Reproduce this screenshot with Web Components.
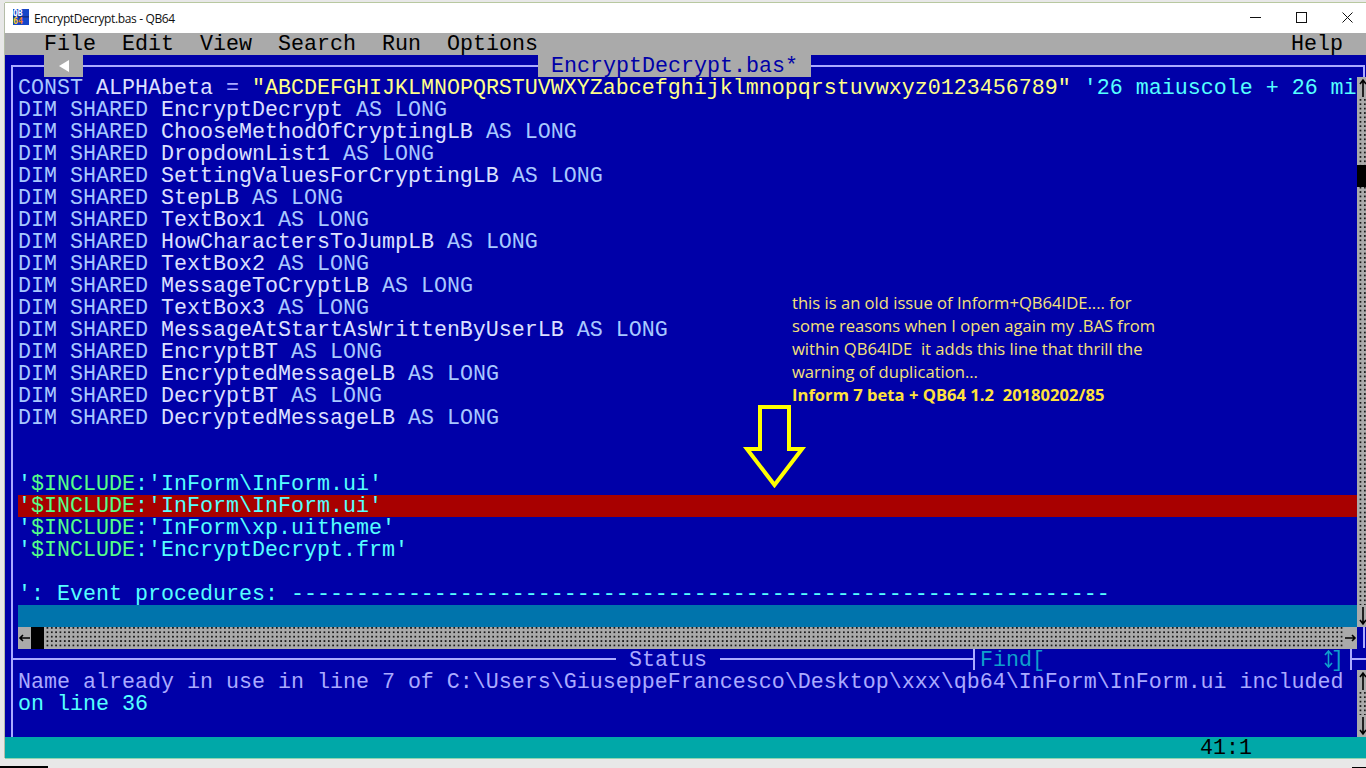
<!DOCTYPE html>
<html><head><meta charset="utf-8">
<style>
html,body{margin:0;height:100%;background:#f0f0f0;overflow:hidden}
</style></head><body>
<qb-window></qb-window>
<template id="t-window"><style>
:host{display:flex;flex-direction:column;width:1366px;height:768px;box-sizing:border-box;background:#e8e8e8;font-family:"Liberation Mono",monospace;position:relative;overflow:hidden}
.frame{flex:none;margin-left:5px;height:755px;margin-top:3px;display:flex;flex-direction:column;box-shadow:0 -1px #b8c8a0,-1px 0 #b4bca8,0 1px #8fd4b0}
.foot{flex:1;position:relative}
.foot i{display:block;height:2px;background:#000;position:absolute;bottom:0}
</style>
<div class="frame"><win-title></win-title><ide-menu></ide-menu><ide-editor></ide-editor><ide-status></ide-status><ide-bar></ide-bar></div>
<div class="foot"><i style="left:0;width:48px"></i><i style="right:0;width:14px;height:1px"></i></div>
</template>
<script>
const MONO='font-family:"Liberation Mono",monospace;font-size:21.67px;line-height:24px;white-space:pre;';
function def(name,html){customElements.define(name,class extends HTMLElement{constructor(){super();this.attachShadow({mode:'open'}).innerHTML=html}})}
function arrowSvg(d){return `<svg width="13" height="22" viewBox="0 0 13 22"><path d="${d}" fill="none" stroke="#000" stroke-width="1.6"/></svg>`}
const dots=`background-color:#aaa;background-image:conic-gradient(#1a1a1a 25%,#aaa 0);background-size:4.333px 4.4px;`;

def('win-title',`<style>:host{display:flex;align-items:center;height:30px;background:#fff;font:12px "Segoe UI","Open Sans","Noto Sans",sans-serif;color:#111}
svg{display:block}.ic{margin:-2px 5px 0 8px}.t{flex:1;letter-spacing:-.36px}.b{display:flex;width:46px;height:28px;padding-bottom:2px;align-items:center;justify-content:center}.btns{display:flex;margin-right:-4px}</style>
<svg class="ic" width="16" height="16" viewBox="0 0 16 16"><rect width="16" height="16" fill="#1546c8"/><rect y="7.5" width="16" height=".8" fill="#0a1a50"/><text x="0" y="7" font-family="'DejaVu Sans Mono',monospace" font-weight="700" font-size="8" fill="#fff">QB</text><text x="0" y="15" font-family="'DejaVu Sans Mono',monospace" font-weight="700" font-size="8.4" fill="#ffd020">6<tspan fill="#f08020">4</tspan></text></svg>
<span class="t">EncryptDecrypt.bas - QB64</span>
<div class="btns"><span class="b"><svg width="11" height="11"><path d="M0 5.5h11" stroke="#111"/></svg></span>
<span class="b"><svg width="11" height="11"><rect x=".5" y=".5" width="10" height="10" fill="none" stroke="#111"/></svg></span>
<span class="b"><svg width="11" height="11"><path d="M.5.5l10 10M10.5.5l-10 10" stroke="#111"/></svg></span></div>`);

def('ide-menu',`<style>:host{display:flex;height:22px;background:#aaa;color:#000;${MONO}padding-left:39px}
span{margin-right:26px;height:22px}.h{margin:0 23px 0 auto}</style>
<span>File</span><span>Edit</span><span>View</span><span>Search</span><span>Run</span><span>Options</span><span class="h">Help</span>`);

def('ide-editor',`<style>:host{display:block;position:relative;z-index:1;height:593px;background:#0000a8;${MONO}color:#aaf;flex:none}
.box{position:absolute;left:6px;top:10px;right:1px;bottom:0;border:solid #aaf;border-width:2px 2px 0 2px}
.code{position:absolute;left:13px;top:22px;width:1339px;overflow:hidden;display:flex;flex-direction:column}
.l{height:22px;display:block;flex:none}
.hl{background:#a80000}
.band{background:#0074ac}
.k{color:#a8c8ff}.w{color:#dde0ff}.y{color:#ff8}.c{color:#5ff}.g{color:#5f8}
.tab{position:absolute;left:533px;top:0;width:273px;height:22px;background:#aaa;color:#0000a8;text-align:center}
.back{position:absolute;left:39px;top:0;width:39px;height:22px;background:#aaa;display:flex;align-items:center;justify-content:center}
.vs{position:absolute;right:0;top:22px;width:9px;bottom:21px;${dots}}
.vs .th{position:absolute;left:0;top:88px;width:9px;height:22px;background:#000}
.vs .up,.vs .dn{position:absolute;left:0;width:9px;height:22px;background:#aaa}
.vs .up{top:0}.vs .dn{bottom:0}
.hs{position:absolute;left:13px;top:572px;width:1339px;height:22px;${dots}}
.hs .a{position:absolute;top:0;width:13px;height:22px;background:#aaa}
.hs .th{position:absolute;left:13px;top:0;width:13px;height:22px;background:#000}
.note{position:absolute;left:787px;top:236px;font:16.6px/23px "Open Sans","Noto Sans",sans-serif;color:#f5e27a;white-space:pre}
.note b{color:#ffe23c;font-weight:700}
svg{display:block}.arrow{position:absolute;left:737px;top:349px}
</style>
<div class="box"></div>
<div class="code"><span class="l"><span class="k">CONST</span> <span class="w">ALPHAbeta</span> = <span class="y">"ABCDEFGHIJKLMNOPQRSTUVWXYZabcefghijklmnopqrstuvwxyz0123456789"</span> <span class="c">'26 maiuscole + 26 mi</span></span>
<span class="l"><span class="k">DIM SHARED</span> <span class="w">EncryptDecrypt</span> <span class="k">AS LONG</span></span>
<span class="l"><span class="k">DIM SHARED</span> <span class="w">ChooseMethodOfCryptingLB</span> <span class="k">AS LONG</span></span>
<span class="l"><span class="k">DIM SHARED</span> <span class="w">DropdownList1</span> <span class="k">AS LONG</span></span>
<span class="l"><span class="k">DIM SHARED</span> <span class="w">SettingValuesForCryptingLB</span> <span class="k">AS LONG</span></span>
<span class="l"><span class="k">DIM SHARED</span> <span class="w">StepLB</span> <span class="k">AS LONG</span></span>
<span class="l"><span class="k">DIM SHARED</span> <span class="w">TextBox1</span> <span class="k">AS LONG</span></span>
<span class="l"><span class="k">DIM SHARED</span> <span class="w">HowCharactersToJumpLB</span> <span class="k">AS LONG</span></span>
<span class="l"><span class="k">DIM SHARED</span> <span class="w">TextBox2</span> <span class="k">AS LONG</span></span>
<span class="l"><span class="k">DIM SHARED</span> <span class="w">MessageToCryptLB</span> <span class="k">AS LONG</span></span>
<span class="l"><span class="k">DIM SHARED</span> <span class="w">TextBox3</span> <span class="k">AS LONG</span></span>
<span class="l"><span class="k">DIM SHARED</span> <span class="w">MessageAtStartAsWrittenByUserLB</span> <span class="k">AS LONG</span></span>
<span class="l"><span class="k">DIM SHARED</span> <span class="w">EncryptBT</span> <span class="k">AS LONG</span></span>
<span class="l"><span class="k">DIM SHARED</span> <span class="w">EncryptedMessageLB</span> <span class="k">AS LONG</span></span>
<span class="l"><span class="k">DIM SHARED</span> <span class="w">DecryptBT</span> <span class="k">AS LONG</span></span>
<span class="l"><span class="k">DIM SHARED</span> <span class="w">DecryptedMessageLB</span> <span class="k">AS LONG</span></span>
<span class="l"></span><span class="l"></span>
<span class="l c">'<span class="g">$INCLUDE</span>:'InForm\\InForm.ui'</span>
<span class="l c hl">'<span class="g">$INCLUDE</span>:'InForm\\InForm.ui'</span>
<span class="l c">'<span class="g">$INCLUDE</span>:'InForm\\xp.uitheme'</span>
<span class="l c">'<span class="g">$INCLUDE</span>:'EncryptDecrypt.frm'</span>
<span class="l"></span>
<span class="l c">': Event procedures: ---------------------------------------------------------------</span>
<span class="l band"></span></div>
<div class="back"><svg width="12" height="12" viewBox="0 0 12 12"><path d="M11 0v12L1 6z" fill="#fff"/></svg></div>
<div class="tab">EncryptDecrypt.bas*</div>
<div class="vs"><div class="up">${arrowSvg('M6 20V3M3 7l3-4 3 4')}</div><div class="th"></div><div class="dn">${arrowSvg('M6 2v17M3 15l3 4 3-4')}</div></div>
<div class="hs"><div class="a" style="left:0">${arrowSvg('M12 11H2M5 8l-3 3 3 3')}</div><div class="th"></div><div class="a" style="right:0">${arrowSvg('M1 11h10M8 8l3 3-3 3')}</div></div>
<div class="note">this is an old issue of Inform+QB64IDE.... for
some reasons when I open again my .BAS from
within QB64IDE  it adds this line that thrill the
warning of duplication...
<b>Inform 7 beta + QB64 1.2  20180202/85</b></div>
<svg class="arrow" width="68" height="84" viewBox="0 0 68 84"><path d="M18 3H47V45H60L32.5 81 5 45H18Z" fill="none" stroke="#ff0" stroke-width="4"/></svg>`);

def('ide-status',`<style>:host{display:block;position:relative;height:89px;background:#0000a8;${MONO}line-height:22px;color:#aaf;flex:none}
.box{position:absolute;left:6px;top:0;bottom:0;border-left:2px solid #aaf}
.rule{position:absolute;top:10px;height:2px;background:#aaf}
.ttl{position:absolute;left:624px;top:2px;background:#0000a8}
.m{position:absolute;left:13px;top:24px}
.c{color:#5ff}
.find{position:absolute;left:975px;top:2px;color:#0fa0cc}
.tick{position:absolute;left:968px;top:0;width:2px;height:22px;background:#aaf}
.ud{position:absolute;left:1317px;top:2px}
.br{position:absolute;left:1326px;top:2px;color:#0fa0cc}
.end{position:absolute;left:1345px;top:0;width:18px;height:22px;border:solid #aaf;border-width:0 2px;box-sizing:border-box}
.end i{display:block;height:2px;background:#aaf;margin-top:10px}
.vs{position:absolute;right:0;top:22px;width:9px;bottom:0;${dots}}
.vs .up,.vs .dn{position:absolute;left:0;width:9px;height:22px;background:#aaa}.vs .up{top:0}.vs .dn{bottom:0}
svg{display:block}
</style>
<div class="box"></div>
<div class="rule" style="left:8px;width:603px"></div><div class="rule" style="left:715px;width:254px"></div>
<span class="ttl">Status</span><div class="tick"></div><span class="find">Find[</span>
<svg class="ud" width="13" height="18" viewBox="0 0 13 18"><path d="M6.5 1v16M3 5l3.5-4L10 5M3 13l3.5 4 3.5-4" fill="none" stroke="#0fa0cc" stroke-width="1.6"/></svg><span class="br">]</span><div class="end"><i></i></div>
<div class="m">Name already in use in line 7 of C:\\Users\\GiuseppeFrancesco\\Desktop\\xxx\\qb64\\InForm\\InForm.ui included
<span class="c">on line 36</span></div>
<div class="vs"><div class="up">${arrowSvg('M6 20V3M3 7l3-4 3 4')}</div><div class="dn">${arrowSvg('M6 2v17M3 15l3 4 3-4')}</div></div>`);

def('ide-bar',`<style>:host{display:flex;height:21px;background:#00a8a8;color:#000;${MONO}padding-left:1195px;flex:none}</style><span>41:1</span>`);

customElements.define('qb-window',class extends HTMLElement{constructor(){super();this.attachShadow({mode:'open'}).appendChild(document.getElementById('t-window').content.cloneNode(true))}});
</script>
</body></html>
